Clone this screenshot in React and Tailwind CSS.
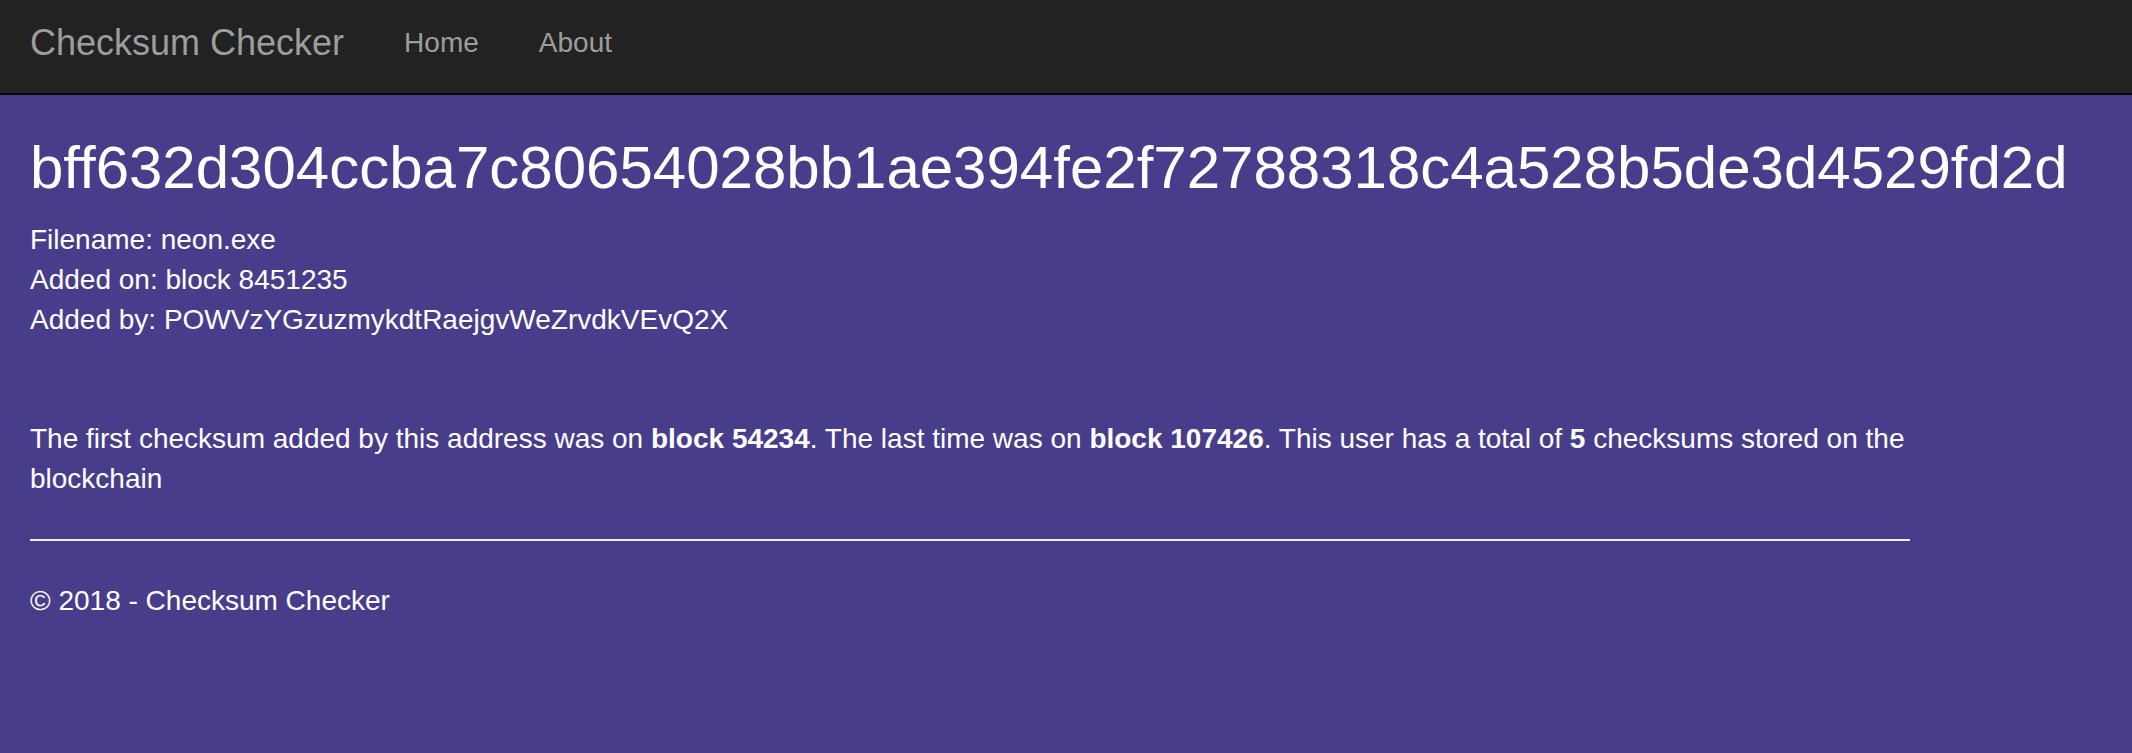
import React from 'react';

// Checksum detail page (Bootstrap-ish layout at 2x)
const checksum = {
  hash: 'bff632d304ccba7c80654028bb1ae394fe2f72788318c4a528b5de3d4529fd2d',
  filename: 'neon.exe',
  block: 8451235,
  address: 'POWVzYGzuzmykdtRaejgvWeZrvdkVEvQ2X',
  firstBlock: 54234,
  lastBlock: 107426,
  total: 5,
};

export default function App() {
  return (
    <div className="min-h-[753px] bg-[#483d8b] text-white font-['Liberation_Sans',Arial,sans-serif]">
      {/* Navbar */}
      <nav className="h-[95px] bg-[#222222] border-b-2 border-[#080808] flex items-start pt-[23px] pl-[30px]">
        <a className="text-[36px] leading-[40px] text-[#9d9d9d] pr-[30px]">Checksum Checker</a>
        <ul className="flex">
          <li className="px-[30px] text-[28px] leading-[40px] text-[#9d9d9d]">Home</li>
          <li className="px-[30px] text-[28px] leading-[40px] text-[#9d9d9d]">About</li>
        </ul>
      </nav>

      {/* Body content */}
      <div className="pl-[30px] w-[1910px]">
        <h2 className="mt-[40px] mb-[19px] text-[60px] leading-[66px] whitespace-nowrap">{checksum.hash}</h2>
        <div className="text-[28px] leading-[40px]">
          <div>Filename: {checksum.filename}</div>
          <div>Added on: block {checksum.block}</div>
          <div>Added by: {checksum.address}</div>
        </div>

        <p className="mt-[79px] text-[28px] leading-[40px]">
          The first checksum added by this address was on <b>block {checksum.firstBlock}</b>. The last time was on{' '}
          <b>block {checksum.lastBlock}</b>. This user has a total of <b>{checksum.total}</b> checksums stored on the
          blockchain
        </p>

        <hr className="mt-[40px] mb-[40px] border-0 border-t-2 border-[#eeeeee]" />

        <footer className="text-[28px] leading-[40px]">
          <p>© 2018 - Checksum Checker</p>
        </footer>
      </div>
    </div>
  );
}
